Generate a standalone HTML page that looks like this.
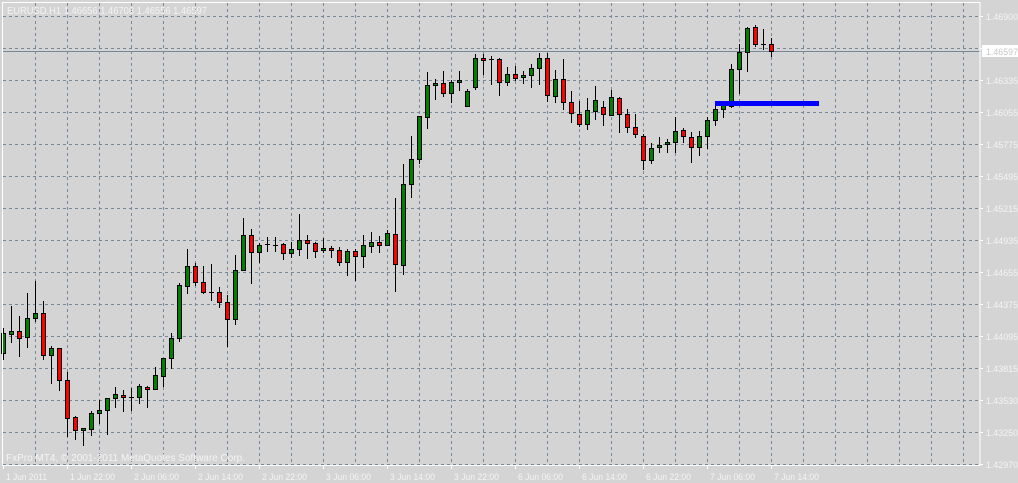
<!DOCTYPE html>
<html><head><meta charset="utf-8"><style>
html,body{margin:0;padding:0;background:#d4d4d4;width:1018px;height:483px;overflow:hidden}
svg{display:block;font-family:"Liberation Sans",sans-serif}
</style></head><body>
<svg id="s" width="1018" height="483" xmlns="http://www.w3.org/2000/svg" shape-rendering="crispEdges">
<rect width="1018" height="483" fill="#d4d4d4"/>
<g id="grid" stroke="#778899" stroke-width="1" stroke-dasharray="3,3"></g>
<line x1="2" y1="51.5" x2="980" y2="51.5" stroke="#778899"/>
<g id="c"></g>
<rect x="715" y="101" width="104" height="5" fill="#0000ff"/>
<rect x="2.5" y="2.5" width="977.5" height="463" fill="none" stroke="#ffffff"/>
<g id="ax" fill="#f4f4f4" font-size="9.5"></g>
<rect x="982" y="45" width="36" height="12" fill="#ffffff"/>
<text x="986" y="55" font-size="9.5" fill="#c8c8c8" textLength="32" lengthAdjust="spacingAndGlyphs">1.46597</text>
<text x="7" y="14" font-size="10" fill="#f4f4f4" textLength="200" lengthAdjust="spacingAndGlyphs">EURUSD.H1  1.46656 1.46708 1.46556 1.46597</text>
<text x="6" y="461" font-size="10" fill="#f4f4f4" textLength="239" lengthAdjust="spacingAndGlyphs">FxPro MT4, © 2001-2011 MetaQuotes Software Corp.</text>
</svg>
<script>
var NS="http://www.w3.org/2000/svg";
function el(p,t,a,txt){var e=document.createElementNS(NS,t);for(var k in a)e.setAttribute(k,a[k]);if(txt)e.textContent=txt;p.appendChild(e);return e;}
var g=document.getElementById('grid');
for(var y=16;y<=464;y+=32)if(y!=48)el(g,'line',{x1:3,y1:y+.5,x2:980,y2:y+.5});
el(g,'line',{x1:3,y1:48.5,x2:980,y2:48.5});
for(var x=35;x<980;x+=32)el(g,'line',{x1:x+.5,y1:3,x2:x+.5,y2:465});
var ax=document.getElementById('ax');
var pl=["1.46900","","1.46335","1.46055","1.45775","1.45495","1.45215","1.44935","1.44655","1.44375","1.44095","1.43815","1.43530","1.43250","1.42970"];
for(var i=0;i<15;i++){var yy=16+32*i;el(ax,'rect',{x:980,y:yy,width:3,height:1,fill:'#ffffff'});if(pl[i])el(ax,'text',{x:986,y:yy+4,textLength:32,lengthAdjust:'spacingAndGlyphs'},pl[i]);}
var tl=["1 Jun 2011","1 Jun 22:00","2 Jun 06:00","2 Jun 14:00","2 Jun 22:00","3 Jun 06:00","3 Jun 14:00","3 Jun 22:00","6 Jun 06:00","6 Jun 14:00","6 Jun 22:00","7 Jun 06:00","7 Jun 14:00"];
for(var i=0;i<13;i++){var xx=3+64*i;el(ax,'rect',{x:xx,y:465,width:1,height:4,fill:'#ffffff'});el(ax,'text',{x:xx+3,y:480,textLength:(i==0?41:45),lengthAdjust:'spacingAndGlyphs'},tl[i]);}
var d=[
[333,353,328,359,1],[331,334,306,342,1],[331,338,316,356,0],[318,337,293,347,1],[313,318,281,321,1],
[313,355,301,359,0],[348,355,346,383,1],[348,380,348,390,0],[380,418,372,436,0],[417,430,416,439,0],
[428,430,428,445,1],[413,429,411,435,1],[410,413,400,423,1],[398,410,398,434,1],[394,398,387,407,1],
[395,397,390,411,0],[397,397,388,410,2],[386,397,384,403,1],[387,389,386,407,0],[375,389,367,389,1],
[358,376,358,386,1],[338,358,333,368,1],[285,338,283,341,1],[266,286,249,293,1],[266,282,263,285,0],
[282,292,266,293,0],[292,292,264,300,2],[292,302,287,307,0],[302,319,295,346,0],[270,319,255,324,1],
[235,270,218,270,1],[235,252,229,283,0],[245,252,243,262,1],[244,244,237,251,2],[245,245,237,251,2],
[244,253,243,259,0],[249,253,242,257,1],[240,249,214,255,1],[240,243,235,258,0],[243,251,242,257,0],
[248,250,238,252,1],[248,250,246,257,0],[250,262,247,265,0],[251,262,249,275,1],[251,256,249,280,0],
[245,256,235,267,1],[242,246,232,252,1],[242,245,236,252,0],[233,245,230,245,1],[234,264,198,291,0],
[184,265,164,274,1],[159,184,136,197,1],[116,159,116,163,1],[85,117,72,128,1],[83,85,79,99,1],
[83,93,71,96,0],[82,93,80,102,1],[80,82,71,90,1],[91,106,89,106,1],[58,87,54,89,1],
[58,60,54,74,0],[59,59,56,84,2],[59,82,58,95,0],[74,82,67,85,1],[74,78,66,80,0],
[75,77,71,83,1],[68,75,64,87,1],[58,68,53,84,1],[58,95,53,101,0],[79,96,70,102,1],
[79,102,59,109,0],[102,113,91,122,0],[114,124,101,126,0],[110,124,98,129,1],[100,111,86,119,1],
[107,114,101,125,0],[97,115,90,115,1],[98,114,97,132,0],[114,127,109,132,0],[127,134,114,137,0],
[136,160,134,169,0],[148,160,143,163,1],[145,147,137,152,1],[142,144,139,152,1],[131,142,117,152,1],
[130,136,128,142,0],[137,147,132,162,0],[136,147,131,155,1],[120,136,117,148,1],[109,120,101,125,1],
[105,109,103,117,1],[69,106,64,107,1],[52,69,44,93,1],[28,52,27,71,1],[27,44,25,46,0],
[44,44,29,49,2],[44,51,38,56,0]];
var c=document.getElementById('c');
for(var k=0;k<d.length;k++){var q=d[k],cx=3+8*k;
el(c,'rect',{x:cx,y:q[2],width:1,height:q[3]-q[2]+1,fill:'#000'});
if(q[4]==2){el(c,'rect',{x:cx-2,y:q[0],width:5,height:1,fill:'#000'});continue;}
el(c,'rect',{x:cx-2,y:q[0],width:5,height:q[1]-q[0]+1,fill:'#000'});
if(q[1]-q[0]>=2)el(c,'rect',{x:cx-1,y:q[0]+1,width:3,height:q[1]-q[0]-1,fill:q[4]?'#008000':'#ff0000'});}
</script>
</body></html>
